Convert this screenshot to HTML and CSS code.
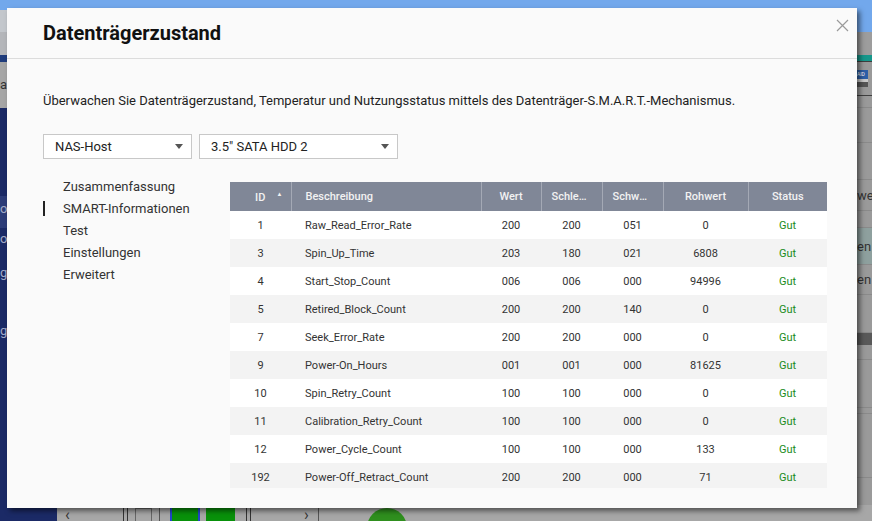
FILE: index.html
```html
<!DOCTYPE html>
<html lang="de">
  <head>
    <meta charset="UTF-8" />
    <meta name="viewport" content="width=device-width, initial-scale=1" />
    <title>Datenträgerzustand</title>
    <link rel="stylesheet" href="styles.css">
  </head>
  <body>
    <!-- Underlying app, dimmed behind the dialog -->
    <div class="desktop">
      <div class="topbar"><span class="tab"></span></div>
      <div class="workspace">
        <aside class="sidebar">
          <div class="side-top"></div>
          <div class="side-band"></div>
          <div class="side-head">a</div>
          <div class="side-spacer"></div>
          <div class="side-item active">oD</div>
          <div class="side-item">ot</div>
          <div class="side-item">g</div>
          <div class="side-item tall">ge</div>
        </aside>
        <main class="main">
          <div class="m-toolbar"></div>
          <div class="m-accent"></div>
          <div class="m-row m-head"><span class="raid-icon">AID</span></div>
          <div class="m-row h12"></div>
          <div class="m-row h35"></div>
          <div class="m-row h37"></div>
          <div class="m-row h31"><span class="m-text">wert</span></div>
          <div class="m-row h17"></div>
          <div class="m-row h37 m-selected"><span class="m-text">en</span></div>
          <div class="m-row h30"><span class="m-text">en</span></div>
          <div class="m-row h38"></div>
          <div class="m-band"></div>
          <div class="m-row h15"></div>
          <div class="m-row h48"></div>
          <div class="m-row h6"></div>
          <div class="m-row h64"></div>
          <div class="dock">
            <span class="dock-arrow">&lsaquo;</span>
            <span class="dock-sep double first"></span>
            <span class="dock-power"></span>
            <span class="dock-sep single"></span>
            <span class="dock-bay selected"></span>
            <span class="dock-bay"></span>
            <span class="dock-sep double"></span>
            <span class="dock-arrow right">&rsaquo;</span>
            <span class="dock-sep single"></span>
            <span class="dock-dot"></span>
          </div>
        </main>
      </div>
    </div>

    <!-- Dialog -->
    <div class="modal">
      <div class="modal-header">
        <h2>Datenträgerzustand</h2>
        <span class="close">
          <svg width="13" height="13" viewBox="0 0 13 13">
            <path d="M1 1 L12 12 M12 1 L1 12" stroke="#9a9a9a" stroke-width="1.2" fill="none" />
          </svg>
        </span>
      </div>

      <div class="modal-body">
        <p class="intro">
          Überwachen Sie Datenträgerzustand, Temperatur und Nutzungsstatus mittels des Datenträger-S.M.A.R.T.-Mechanismus.
        </p>

        <div class="selects">
          <div class="select host"><span>NAS-Host</span><i class="caret"></i></div>
          <div class="select disk"><span>3.5" SATA HDD 2</span><i class="caret"></i></div>
        </div>

        <div class="content">
          <ul class="side-nav">
            <li>Zusammenfassung</li>
            <li class="active">SMART-Informationen</li>
            <li>Test</li>
            <li>Einstellungen</li>
            <li>Erweitert</li>
          </ul>

          <div class="table-wrap">
            <table class="smart-table">
              <colgroup>
                <col class="c-id" />
                <col class="c-desc" />
                <col class="c-val" />
                <col class="c-worst" />
                <col class="c-thresh" />
                <col class="c-raw" />
                <col class="c-status" />
              </colgroup>
              <thead>
                <tr>
                  <th>ID<span class="sort">&#9650;</span></th>
                  <th class="left">Beschreibung</th>
                  <th>Wert</th>
                  <th>Schlechtester</th>
                  <th>Schwellenwert</th>
                  <th>Rohwert</th>
                  <th>Status</th>
                </tr>
              </thead>
              <tbody>
                <tr><td>1</td><td class="left">Raw_Read_Error_Rate</td><td>200</td><td>200</td><td>051</td><td>0</td><td class="ok">Gut</td></tr>
                <tr><td>3</td><td class="left">Spin_Up_Time</td><td>203</td><td>180</td><td>021</td><td>6808</td><td class="ok">Gut</td></tr>
                <tr><td>4</td><td class="left">Start_Stop_Count</td><td>006</td><td>006</td><td>000</td><td>94996</td><td class="ok">Gut</td></tr>
                <tr><td>5</td><td class="left">Retired_Block_Count</td><td>200</td><td>200</td><td>140</td><td>0</td><td class="ok">Gut</td></tr>
                <tr><td>7</td><td class="left">Seek_Error_Rate</td><td>200</td><td>200</td><td>000</td><td>0</td><td class="ok">Gut</td></tr>
                <tr><td>9</td><td class="left">Power-On_Hours</td><td>001</td><td>001</td><td>000</td><td>81625</td><td class="ok">Gut</td></tr>
                <tr><td>10</td><td class="left">Spin_Retry_Count</td><td>100</td><td>100</td><td>000</td><td>0</td><td class="ok">Gut</td></tr>
                <tr><td>11</td><td class="left">Calibration_Retry_Count</td><td>100</td><td>100</td><td>000</td><td>0</td><td class="ok">Gut</td></tr>
                <tr><td>12</td><td class="left">Power_Cycle_Count</td><td>100</td><td>100</td><td>000</td><td>133</td><td class="ok">Gut</td></tr>
                <tr><td>192</td><td class="left">Power-Off_Retract_Count</td><td>200</td><td>200</td><td>000</td><td>71</td><td class="ok">Gut</td></tr>
              </tbody>
            </table>
          </div>
        </div>
      </div>
    </div>
  </body>
</html>
```

FILE: styles.css
```css
/* Global */
* {
  box-sizing: border-box;
}

body {
  margin: 0;
  width: 872px;
  height: 521px;
  overflow: hidden;
  position: relative;
  font-family: Roboto, "Noto Sans", sans-serif;
  background-color: #999;
}

/* Dimmed app in the background */
.desktop {
  display: flex;
  flex-direction: column;
  height: 521px;
}

.topbar {
  height: 32px;
  flex: none;
  background-color: #72a8ec;
  display: flex;
  align-items: flex-end;
}

.tab {
  width: 40px;
  height: 22px;
  border-radius: 0 10px 0 0;
  background-color: #c3c7cc;
}

.workspace {
  flex: 1;
  display: flex;
  min-height: 0;
}

.sidebar {
  width: 57px;
  flex: none;
  background-color: #1b2a66;
  color: #a3abc9;
  font-size: 13px;
  overflow: hidden;
}

.side-top {
  height: 23px;
  background-color: #b4b6ba;
}

.side-band {
  height: 7px;
  background-color: #1f3c7c;
}

.side-head {
  height: 46px;
  line-height: 46px;
  background-color: #a6a6a6;
  color: #333;
}

.side-spacer {
  height: 88px;
}

.side-item {
  height: 34px;
  line-height: 22px;
}

.side-item.active {
  height: 32px;
  padding-top: 2px;
  background-color: #2c3c78;
}

.side-item.tall {
  height: 60px;
  line-height: 70px;
}

.main {
  flex: 1;
  display: flex;
  flex-direction: column;
  background-color: #9a9a9a;
  min-width: 0;
}

.m-toolbar {
  height: 23px;
  flex: none;
  background-color: #9d9d9d;
}

.m-accent {
  height: 6px;
  flex: none;
  background-color: #17978b;
}

.m-row {
  flex: none;
  display: flex;
  align-items: center;
  border-bottom: 1px solid #8a8a8a;
  font-size: 13px;
  color: #333;
}

.m-head {
  height: 35px;
  border-top: 1px solid #3f3f3f;
  border-bottom: 1px solid #3f3f3f;
}

.h6 { height: 6px; }
.h12 { height: 12px; }
.h15 { height: 15px; }
.h17 { height: 17px; }
.h30 { height: 30px; }
.h31 { height: 31px; }
.h35 { height: 35px; }
.h37 { height: 37px; }
.h38 { height: 38px; }
.h48 { height: 48px; }
.h64 { height: 64px; }

.m-selected {
  background-color: #8ea09e;
}

.m-text {
  padding-left: 800px;
}

.raid-icon {
  margin-left: 800px;
  width: 11px;
  height: 17px;
  font-size: 5px;
  line-height: 8px;
  color: #fff;
  background: linear-gradient(#2d5fa8 0 9px, #c9c9c9 9px 12px, #555 12px);
  overflow: hidden;
}

.m-band {
  height: 12px;
  flex: none;
  background-color: #595959;
}

.dock {
  margin-top: auto;
  height: 16px;
  display: flex;
  align-items: flex-start;
  padding-left: 8px;
  background-color: #a7a7a7;
  color: #333;
  font-size: 16px;
  line-height: 14px;
  overflow: hidden;
}

.dock-arrow {
  width: 7px;
  padding-top: 3px;
}

.dock-arrow.right {
  margin-left: 53px;
}

.dock-sep {
  height: 16px;
  flex: none;
}

.dock-sep.double {
  width: 5px;
  margin-left: 11px;
  border-left: 1px solid #333;
  border-right: 1px solid #333;
}

.dock-sep.double.first {
  margin-left: 51px;
}

.dock-sep.single {
  width: 1px;
  margin-left: 7px;
  background-color: #555;
}

.dock-power {
  width: 17px;
  height: 14px;
  margin-top: 3px;
  margin-left: 7px;
  border: 1px solid #666;
}

.dock-bay {
  width: 29px;
  height: 16px;
  margin-left: 6px;
  background-color: #08910a;
}

.dock-bay.selected {
  width: 30px;
  margin-left: 10px;
  border-left: 2px solid #2244cc;
  border-right: 2px solid #2244cc;
}

.dock-dot {
  width: 40px;
  height: 40px;
  border-radius: 50%;
  margin-left: 48px;
  margin-top: 3px;
  background-color: #2f8f1e;
}

/* Dialog */
.modal {
  position: absolute;
  left: 7px;
  top: 8px;
  width: 850px;
  height: 500px;
  background-color: #fafafa;
  box-shadow: 3px 3px 5px rgba(0, 0, 0, 0.5);
}

.modal-header {
  height: 51px;
  display: flex;
  align-items: center;
  padding-left: 36px;
  border-bottom: 1px solid #dcdcdc;
}

.modal-header h2 {
  margin: 0;
  font-size: 20px;
  font-weight: 700;
  color: #111;
}

.close {
  position: absolute;
  top: 9px;
  right: 8px;
  cursor: pointer;
}

.modal-body {
  padding: 0 0 0 36px;
}

.intro {
  margin: 34px 0 0;
  font-size: 13px;
  line-height: 16px;
  color: #222;
}

/* Selects */
.selects {
  display: flex;
  gap: 7px;
  margin-top: 25px;
}

.select {
  height: 25px;
  display: flex;
  align-items: center;
  justify-content: space-between;
  padding: 0 8px 0 11px;
  background-color: #fff;
  border: 1px solid #c8c8c8;
  font-size: 13px;
  color: #222;
}

.select.host {
  width: 149px;
}

.select.disk {
  width: 199px;
}

.caret {
  width: 0;
  height: 0;
  border-left: 4.5px solid transparent;
  border-right: 4.5px solid transparent;
  border-top: 5px solid #555;
}

/* Content */
.content {
  display: flex;
  margin-top: 17px;
}

.side-nav {
  width: 187px;
  flex: none;
  margin: 0;
  padding: 0;
  list-style: none;
}

.side-nav li {
  position: relative;
  padding-left: 20px;
  font-size: 13px;
  line-height: 22px;
  color: #333;
}

.side-nav li.active::before {
  content: "";
  position: absolute;
  left: 0;
  top: 3px;
  width: 2px;
  height: 15px;
  background-color: #222;
}

/* SMART table */
.table-wrap {
  flex: none;
  margin-top: 6px;
  width: 597px;
  height: 306px;
  overflow: hidden;
}

.smart-table {
  width: 597px;
  table-layout: fixed;
  border-collapse: collapse;
  font-size: 11px;
  color: #333;
}

.c-id { width: 61px; }
.c-desc { width: 190px; }
.c-val { width: 60px; }
.c-worst { width: 61px; }
.c-thresh { width: 61px; }
.c-raw { width: 85px; }
.c-status { width: 79px; }

.smart-table th {
  height: 29px;
  padding: 0 10px;
  background-color: #808797;
  color: #f2f2f2;
  font-weight: 500;
  font-size: 11px;
  text-align: center;
  white-space: nowrap;
  overflow: hidden;
  text-overflow: ellipsis;
  border-right: 1px solid #a4a9b5;
}

.smart-table th:last-child {
  border-right: none;
}

.smart-table td {
  height: 28px;
  padding: 0 8px;
  text-align: center;
  white-space: nowrap;
  overflow: hidden;
}

.smart-table .left {
  text-align: left;
  padding-left: 14px;
}

.smart-table tbody tr:nth-child(odd) {
  background-color: #fff;
}

.smart-table tbody tr:nth-child(even) {
  background-color: #f3f3f3;
}

.sort {
  display: inline-block;
  width: 0;
  text-indent: 11px;
  font-size: 6px;
  vertical-align: 5px;
}

.ok {
  color: #1a8c1a;
}
```
